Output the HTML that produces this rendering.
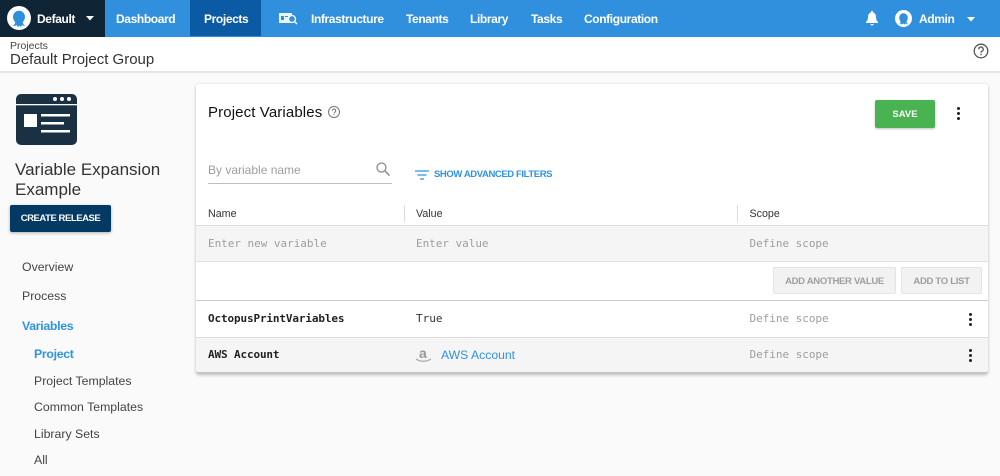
<!DOCTYPE html>
<html><head><meta charset="utf-8">
<style>
html,body{margin:0;padding:0}
body{width:1000px;height:476px;position:relative;overflow:hidden;background:#fafafa;font-family:"Liberation Sans",sans-serif;color:#333}
.a{position:absolute}
.t{position:absolute;white-space:nowrap;line-height:16px}
.n{color:#fff;font-size:12px;font-weight:bold;top:11px;letter-spacing:-.38px}
.m{font-family:"DejaVu Sans Mono","Liberation Mono",monospace;font-size:11px;letter-spacing:.02px}
.m.g{letter-spacing:-.03px}
.b{font-weight:bold;color:#222;letter-spacing:-.13px}
.g{color:#9e9e9e}
.s{font-size:12.300px;color:#444}
.v{color:#2f93e0;font-weight:bold;letter-spacing:-.3px}
.h{font-size:10.700px;color:#333}
.btn{position:absolute;background:#f2f2f2;border:1px solid #e4e4e4;border-radius:2px;color:#9e9e9e;font-size:9.500px;letter-spacing:-.3px;font-weight:bold;text-align:center;box-sizing:border-box;height:27px;line-height:28px}
.d{position:absolute;width:3px;height:3px;border-radius:50%;background:#222}
</style></head><body>
<div class="a" style="left:0;top:0;width:1000px;height:37px;background:#3090de"></div>
<div class="a" style="left:0;top:0;width:105px;height:37px;background:#0f2535"></div>
<div class="a" style="left:190px;top:0;width:71px;height:36px;background:#0a5ba3"></div>
<svg class="a" style="left:7px;top:6px" width="25" height="25" viewBox="0 0 25 25"><circle cx="12" cy="12" r="12" fill="#fff"/><path transform="translate(1.800 2.200) scale(.85)" d="M4.500 20.500c2-1 3-2 3-4-1-2-2.500-3-2.500-6.500a7 7 0 0 1 14 0c0 3.500-1.500 4.500-2.500 6.500 0 2 1 3 3 4-2 .5-3.500 0-4-1 0 1-.5 2-1.500 2.500-1-.5-1.500-1.500-1.500-2.500 0 1-.5 2-1.500 2.500-1-.5-1.500-1.500-1.500-2.500-.5 1-2 1.500-4 1z" fill="#2f8fdc"/></svg>
<span class="t n" style="left:37px">Default</span>
<svg class="a" style="left:85px;top:16px" width="10" height="5"><path d="M1 0h8L5 4.500z" fill="#fff"/></svg>
<span class="t n" style="left:116px">Dashboard</span>
<span class="t n" style="left:204px">Projects</span>
<svg class="a" style="left:279px;top:12px" width="20" height="14" viewBox="0 0 20 14"><rect x="0" y="1" width="13" height="10" fill="#fff" opacity=".9"/><rect x="2" y="4" width="3" height="4" fill="#3090de"/><rect x="6" y="4" width="3" height="1" fill="#3090de"/><circle cx="13" cy="7" r="3.500" fill="#3090de" stroke="#fff" stroke-width="1.300"/><path d="M15.500 9.500l2.500 2.500" stroke="#fff" stroke-width="1.300"/></svg>
<span class="t n" style="left:311px">Infrastructure</span>
<span class="t n" style="left:406px">Tenants</span>
<span class="t n" style="left:470px">Library</span>
<span class="t n" style="left:531px">Tasks</span>
<span class="t n" style="left:584px">Configuration</span>
<svg class="a" style="left:865px;top:11px" width="14" height="15" viewBox="0 0 14 15"><path d="M7 0a1 1 0 0 1 1 1.500c2 .5 3 2 3 4.500 0 3 1 4 2 5v1H1v-1c1-1 2-2 2-5 0-2.500 1-4 3-4.500A1 1 0 0 1 7 0zM5.500 13h3a1.500 1.500 0 0 1-3 0z" fill="#fff"/></svg>
<svg class="a" style="left:895px;top:10px" width="17" height="17" viewBox="0 0 17 17"><circle cx="8.500" cy="8.500" r="8.500" fill="#fff"/><path transform="translate(1.300 1.500) scale(.85)" d="M3 15c1.500-1 2-2 2-3C4 10.500 3.500 9 3.500 7a5 5 0 0 1 10 0c0 2-.5 3.500-1.500 5 0 1 .5 2 2 3-1.500.5-2.500-.5-3-1l-1.500 1.500-1.500-1.500-1.500 1.500L5 14c-.5.5-.5 1.200-2 1z" fill="#3090de"/></svg>
<span class="t n" style="left:919px">Admin</span>
<svg class="a" style="left:966px;top:17px" width="10" height="5"><path d="M1 0h8L5 4.500z" fill="#fff"/></svg>

<div class="a" style="left:0;top:37px;width:1000px;height:34px;background:#fff;border-bottom:2px solid #e6e6e6;box-sizing:content-box"></div>
<span class="t" style="left:10px;top:38px;font-size:10.500px;color:#444">Projects</span>
<span class="t" style="left:10px;top:52px;font-size:15px;color:#333">Default Project Group</span>
<svg class="a" style="left:973px;top:43px" width="16" height="16" viewBox="0 0 16 16"><circle cx="8" cy="8" r="6.800" fill="none" stroke="#555" stroke-width="1.300"/><path d="M5.800 6.300A2.200 2.200 0 1 1 9 8.200c-.7.400-1 .8-1 1.600" fill="none" stroke="#555" stroke-width="1.300"/><rect x="7.300" y="10.800" width="1.400" height="1.400" fill="#555"/></svg>

<svg class="a" style="left:16px;top:94px" width="61" height="51" viewBox="0 0 61 51"><rect x="0" y="0" width="61" height="51" rx="5" fill="#1a3144"/><rect x="0" y="10" width="61" height="1.300" fill="#fafafa"/><circle cx="39" cy="5" r="2" fill="#fff"/><circle cx="46" cy="5" r="2" fill="#fff"/><circle cx="53" cy="5" r="2" fill="#fff"/><rect x="8" y="20" width="13" height="13" fill="#fff"/><rect x="25" y="20" width="29" height="2.500" fill="#fff"/><rect x="25" y="28" width="23" height="2.500" fill="#fff"/><rect x="25" y="36" width="29" height="2.500" fill="#fff"/></svg>
<span class="t" style="left:15px;top:160px;font-size:17px;line-height:20px;color:#333">Variable Expansion<br>Example</span>
<div class="a" style="left:10px;top:205px;width:101px;height:27px;background:#033a64;border-radius:2px;box-shadow:0 1px 3px rgba(0,0,0,.3);color:#fff;font-size:9.500px;letter-spacing:-.45px;font-weight:bold;text-align:center;line-height:27px">CREATE RELEASE</div>
<span class="t s" style="left:22px;top:259px">Overview</span>
<span class="t s" style="left:22px;top:288px">Process</span>
<span class="t s v" style="left:22px;top:318px">Variables</span>
<span class="t s v" style="left:34px;top:346px">Project</span>
<span class="t s" style="left:34px;top:373px">Project Templates</span>
<span class="t s" style="left:34px;top:399px">Common Templates</span>
<span class="t s" style="left:34px;top:426px">Library Sets</span>
<span class="t s" style="left:34px;top:452px">All</span>

<div class="a" style="left:196px;top:84px;width:792px;height:290px;background:#fff;border-radius:3px;box-shadow:0 1px 3px rgba(0,0,0,.25)"></div>
<span class="t" style="left:208px;top:105px;font-size:15px;letter-spacing:.12px;color:#111">Project Variables</span>
<svg class="a" style="left:327px;top:105px" width="14" height="14" viewBox="0 0 14 14"><circle cx="7" cy="7" r="5.500" fill="none" stroke="#777" stroke-width="1"/><path d="M5.300 5.700A1.700 1.700 0 1 1 7.800 7.200c-.5.300-.8.600-.8 1.200" fill="none" stroke="#777"/><rect x="6.500" y="9.200" width="1" height="1" fill="#777"/></svg>
<div class="a" style="left:875px;top:100px;width:60px;height:28px;background:#48b350;border-radius:2px;box-shadow:0 1px 2px rgba(0,0,0,.25);color:#fff;font-size:9.500px;font-weight:bold;text-align:center;line-height:29px">SAVE</div>
<i class="d" style="left:956.500px;top:107px"></i><i class="d" style="left:956.500px;top:112px"></i><i class="d" style="left:956.500px;top:117px"></i>

<span class="t" style="left:208px;top:162px;font-size:12px;color:#9e9e9e">By variable name</span>
<svg class="a" style="left:375px;top:161px" width="16" height="16" viewBox="0 0 16 16"><circle cx="6.500" cy="6.500" r="4.500" fill="none" stroke="#8a8a8a" stroke-width="1.300"/><path d="M10 10l4.500 4.500" stroke="#8a8a8a" stroke-width="1.500"/></svg>
<div class="a" style="left:208px;top:183px;width:184px;height:1px;background:#bdbdbd"></div>
<svg class="a" style="left:415px;top:170px" width="14" height="11"><path d="M0 1h14M2.500 5h9M5 9h4" stroke="#2f93e0" stroke-width="1.300"/></svg>
<span class="t" style="left:434px;top:167px;font-size:9.500px;letter-spacing:-.4px;font-weight:bold;color:#2f93e0">SHOW ADVANCED FILTERS</span>

<span class="t h" style="left:208px;top:206px">Name</span>
<span class="t h" style="left:416px;top:206px">Value</span>
<span class="t h" style="left:749.500px;top:206px">Scope</span>
<div class="a" style="left:404px;top:205px;width:1px;height:17px;background:#ddd"></div>
<div class="a" style="left:737px;top:205px;width:1px;height:17px;background:#ddd"></div>

<div class="a" style="left:196px;top:225px;width:792px;height:37px;box-sizing:border-box;background:#f5f5f5;border-top:1px solid #ddd;border-bottom:1px solid #e0e0e0"></div>
<span class="t m g" style="left:208px;top:236px">Enter new variable</span>
<span class="t m g" style="left:416px;top:236px">Enter value</span>
<span class="t m g" style="left:749.500px;top:236px">Define scope</span>
<div class="btn" style="left:773px;top:267px;width:123px">ADD ANOTHER VALUE</div>
<div class="btn" style="left:901px;top:267px;width:81px">ADD TO LIST</div>

<div class="a" style="left:196px;top:300px;width:792px;height:1px;background:#ccc"></div>
<span class="t m b" style="left:208px;top:311px">OctopusPrintVariables</span>
<span class="t m" style="left:416px;top:311px;color:#333">True</span>
<span class="t m g" style="left:749.500px;top:311px">Define scope</span>
<i class="d" style="left:968.500px;top:313px"></i><i class="d" style="left:968.500px;top:318px"></i><i class="d" style="left:968.500px;top:323px"></i>

<div class="a" style="left:196px;top:337px;width:792px;height:37px;background:#f5f5f5;border-top:1px solid #ddd;border-bottom:2px solid #c4c4c4;box-sizing:border-box;border-radius:0 0 3px 3px"></div>
<span class="t m b" style="left:208px;top:347px">AWS Account</span>
<span class="t" style="left:419px;top:345px;font-size:14px;font-weight:bold;color:#999">a</span>
<svg class="a" style="left:415px;top:358px" width="17" height="5"><path d="M1 1c4 3 10 3 15 0" fill="none" stroke="#aaa" stroke-width="1.300"/></svg>
<span class="t" style="left:441px;top:347px;font-size:12.200px;color:#2f93e0">AWS Account</span>
<span class="t m g" style="left:749.500px;top:347px">Define scope</span>
<i class="d" style="left:968.500px;top:349px"></i><i class="d" style="left:968.500px;top:354px"></i><i class="d" style="left:968.500px;top:359px"></i>
</body></html>
